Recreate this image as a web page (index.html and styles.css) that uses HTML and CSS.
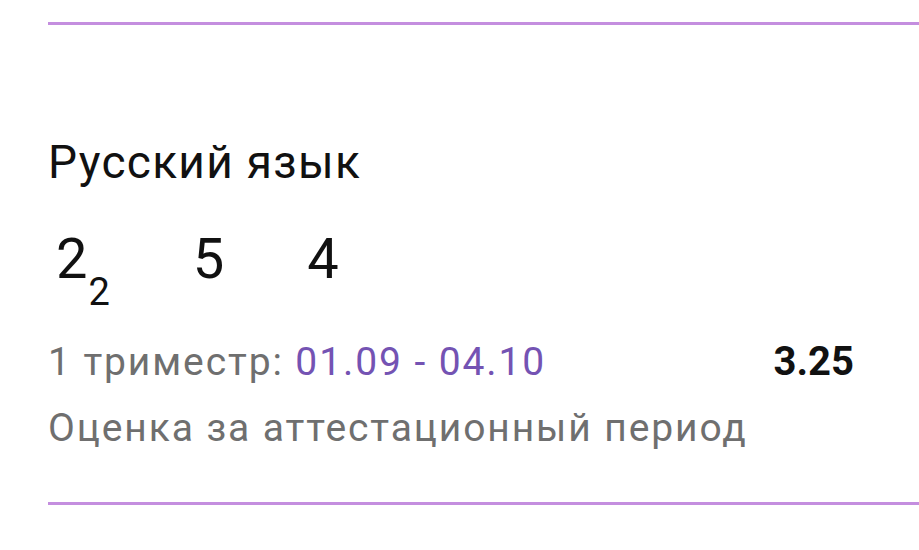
FILE: index.html
```html
<!DOCTYPE html>
<html lang="ru">
<head>
    <meta charset="UTF-8">
    <meta name="viewport" content="width=device-width, initial-scale=1.0">
    <title>Оценки</title>
    <link rel="stylesheet" href="styles.css">
</head>
<body>
    <div class="subject-list">
        <hr class="divider">
        <div class="subject">
            <div class="subject-title">Русский язык</div>
            <div class="marks">
                <span class="mark">2<sub class="weight">2</sub></span>
                <span class="mark">5</span>
                <span class="mark">4</span>
            </div>
            <div class="period-row">
                <span class="period">1 триместр: <span class="period-dates">01.09 - 04.10</span></span>
                <span class="average">3.25</span>
            </div>
            <div class="final-mark">Оценка за аттестационный период</div>
        </div>
        <hr class="divider">
    </div>
</body>
</html>
```

FILE: styles.css
```css
body {
    margin: 0;
    background: #fff;
    font-family: Roboto, "Noto Sans", sans-serif;
    color: #111;
}

.subject-list {
    padding: 22px 0 0 48px;
}

.divider {
    margin: 0;
    border: 0;
    height: 3px;
    background-color: #c48edf;
}

.subject {
    padding: 110px 65px 51px 0;
}

.subject-title {
    font-size: 46px;
    line-height: 54px;
    letter-spacing: 1.3px;
}

.marks {
    display: flex;
    gap: 65px;
    margin: 38px 0 48px;
    height: 64px;
    font-size: 56px;
    line-height: 64px;
}

.mark {
    padding: 0 10px 0 8px;
}

.weight {
    font-size: 38px;
    line-height: 0;
    vertical-align: -27px;
    margin-left: 1px;
}

.period-row {
    display: flex;
    justify-content: space-between;
    font-size: 39px;
    line-height: 46px;
}

.period {
    color: #6f6f6f;
    letter-spacing: 1.9px;
}

.period-dates {
    color: #7453b3;
}

.average {
    font-size: 40px;
    font-weight: bold;
    color: #111;
}

.final-mark {
    margin-top: 20px;
    font-size: 39px;
    line-height: 46px;
    letter-spacing: 1.9px;
    color: #6f6f6f;
}
```
